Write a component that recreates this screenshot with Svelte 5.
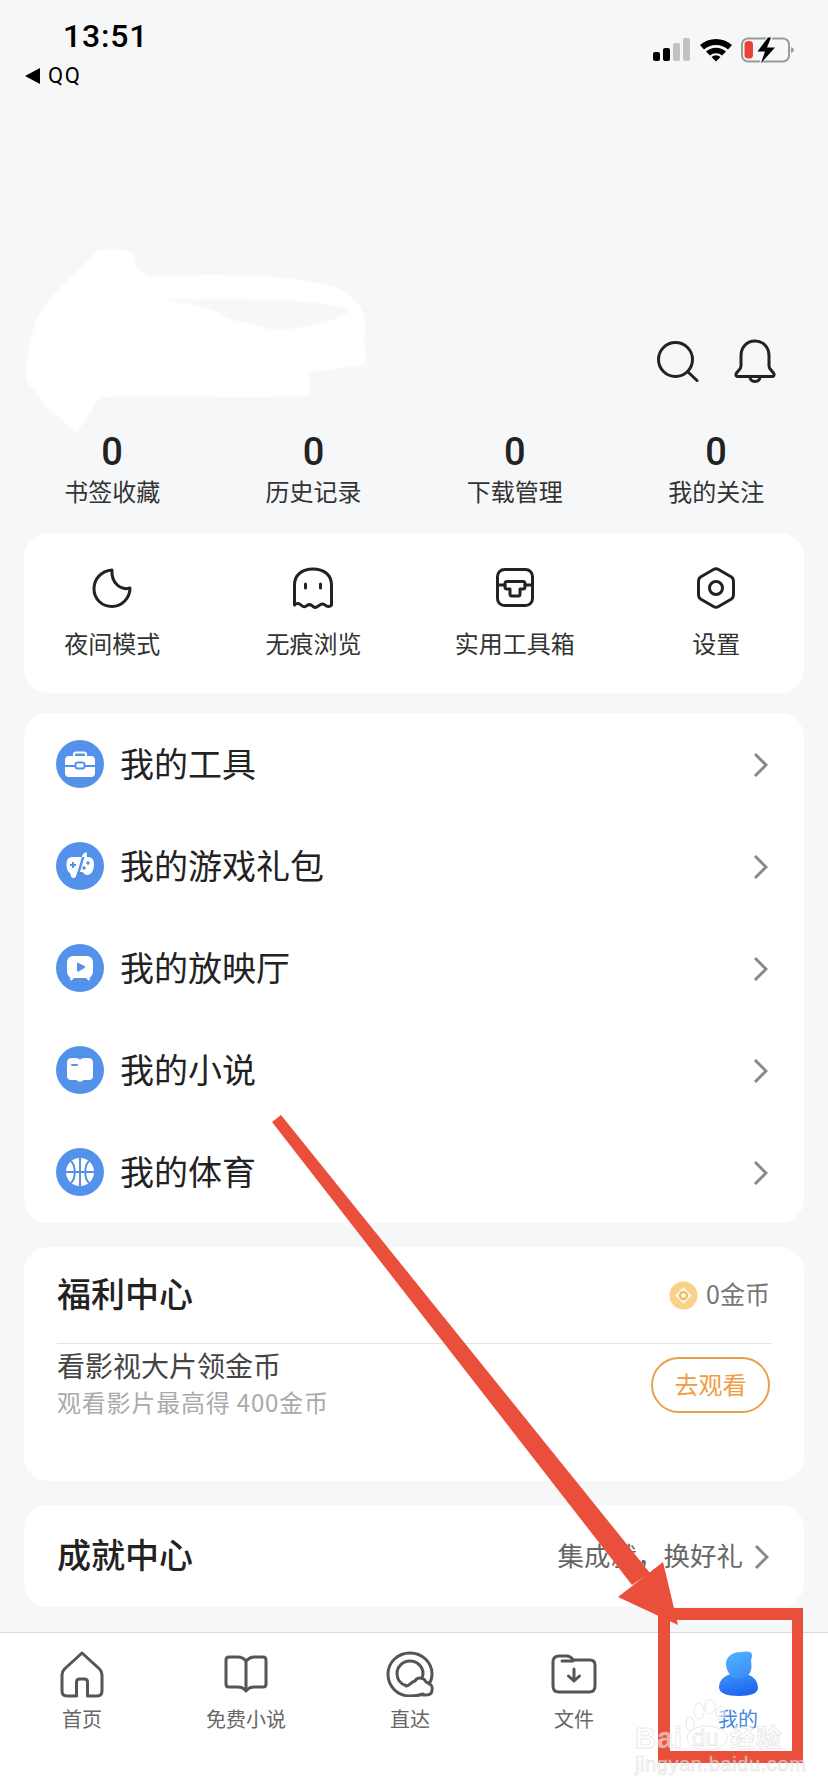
<script>
  const stats = ['书签收藏', '历史记录', '下载管理', '我的关注'];
  const tabs = ['首页', '免费小说', '直达', '文件', '我的'];
</script>

{#snippet chevron()}
  <svg class="chevron" width="15" height="26" viewBox="0 0 15 26"><path d="M2 2 L13 13 L2 24" /></svg>
{/snippet}

<div class="page">
  <header class="status">
    <div>
      <div class="time">13:51</div>
      <div class="back"><i class="tri"></i>QQ</div>
    </div>
    <svg class="sys" width="141" height="27" viewBox="653 37 141 27">
      <rect x="653" y="52" width="7" height="9" rx="2" fill="#000" />
      <rect x="663" y="48" width="7" height="13" rx="2" fill="#000" />
      <rect x="673" y="43" width="7" height="18" rx="2" fill="#c2c2c4" />
      <rect x="683" y="38" width="7" height="23" rx="2" fill="#c2c2c4" />
      <path d="M700 45 A24 24 0 0 1 732 45 L728 49.5 A18 18 0 0 0 704 49.5Z M706 51.5 A15 15 0 0 1 726 51.5 L722 55.5 A9.5 9.5 0 0 0 710 55.5Z M711.5 57 A7 7 0 0 1 720.5 57 L716 61.5Z" fill="#000" />
      <rect x="742" y="38.5" width="47" height="23" rx="6" fill="none" stroke="#9a9a9c" stroke-width="2" />
      <path d="M791 47 Q794 48 794 50 Q794 52 791 53Z" fill="#9a9a9c" />
      <rect x="744.5" y="41" width="8.5" height="17.5" rx="3.5" fill="#ea4335" />
      <path d="M768 36 L755 52 H763 L759 64 L777 47 H769 L773 36Z" fill="#f6f7f9" />
      <path d="M768 37.5 L757.5 51.5 H765 L761 63 L775 47.5 H767 L771 37.5Z" fill="#000" />
    </svg>
  </header>

  <div class="tools">
    <svg width="42" height="41" viewBox="0 0 42 41" fill="none" stroke="#222" stroke-width="3" stroke-linecap="round">
      <circle cx="18.5" cy="18.5" r="17" />
      <path d="M31 31 L40 39.5" />
    </svg>
    <svg width="42" height="44" viewBox="0 0 42 44" fill="none" stroke="#222" stroke-width="3" stroke-linejoin="round">
      <path d="M21 2 C12 2 7 9 7 17 V27 C7 31 3 32 2 35 Q1.5 37.5 4 37.5 H38 Q40.5 37.5 40 35 C39 32 35 31 35 27 V17 C35 9 30 2 21 2Z" />
      <path d="M16 37.5 C16 41 18 42.5 21 42.5 C24 42.5 26 41 26 37.5" />
    </svg>
  </div>

  <section class="grid stats">
    {#each stats as label}
      <div>
        <div class="num">0</div>
        <div class="label">{label}</div>
      </div>
    {/each}
  </section>

  <section class="card shortcuts">
    <div class="grid">
      <div>
        <span class="ico-box">
          <svg class="ico" width="42" height="42" viewBox="0 0 42 42"><path d="M21 3 C10 4 3 12 3 22 C3 32 11 39.5 21 39.5 C31 39.5 39 31 39 21 C30 24 20 16 21 3Z" /></svg>
        </span>
        <div class="label">夜间模式</div>
      </div>
      <div>
        <span class="ico-box">
          <svg class="ico" width="42" height="42" viewBox="0 0 42 42">
            <path d="M2.5 38 V18 C2.5 8 10 2 21 2 C32 2 39.5 8 39.5 18 V38 C38 40 35 40 33 38 C31 36 29 37 27 38.5 C25 40.5 23 41 21 39.5 C19 37.5 17 37 15 38.5 C13 40.5 11 40 9 38 C7 36 4 36 2.5 38Z" />
            <path d="M13.5 17 V21 M28.5 17 V21" />
          </svg>
        </span>
        <div class="label">无痕浏览</div>
      </div>
      <div>
        <span class="ico-box">
          <svg class="ico" width="42" height="42" viewBox="-2 -1 42 42">
            <rect x="1.5" y="1.5" width="35" height="36" rx="7" />
            <path d="M1.5 17 H9 M29 17 H36.5" />
            <path d="M11 13.5 H27 Q29 13.5 29 15.5 V19 Q29 21 27 21 H24 V26 Q24 28 22 28 H16 Q14 28 14 26 V21 H11 Q9 21 9 19 V15.5 Q9 13.5 11 13.5Z" />
          </svg>
        </span>
        <div class="label">实用工具箱</div>
      </div>
      <div>
        <span class="ico-box">
          <svg class="ico" width="42" height="44" viewBox="-1.5 0 42 44">
            <path d="M17 3.5 Q19.5 2 22 3.5 L35 11 Q37 12.5 37 15 V29 Q37 31.5 35 33 L22 40.5 Q19.5 42 17 40.5 L4 33 Q2 31.5 2 29 V15 Q2 12.5 4 11Z" />
            <circle cx="19.5" cy="22" r="6.5" />
          </svg>
        </span>
        <div class="label">设置</div>
      </div>
    </div>
  </section>

  <section class="card menu">
    <div class="row">
      <span class="badge">
        <svg width="48" height="48" viewBox="0 0 48 48">
          <path d="M18 16 V14.5 Q18 12.5 20 12.5 H28 Q30 12.5 30 14.5 V16" fill="none" stroke="#fff" stroke-width="2" />
          <path d="M13 16 H35 Q39 16 39 20 V25 H9 V20 Q9 16 13 16Z M9 27 H39 V33 Q39 37 35 37 H13 Q9 37 9 33Z" fill="#fff" />
          <rect x="19.5" y="22.5" width="9" height="6" rx="2" fill="#fff" stroke="#5391ea" stroke-width="2" />
        </svg>
      </span>
      <span class="name">我的工具</span>
      {@render chevron()}
    </div>
    <div class="row">
      <span class="badge">
        <svg width="48" height="48" viewBox="0 0 48 48">
          <path d="M16 15 H32 Q38 15 38 22 C38 29 35 33 31 33 C29 33 28 31 26.5 30 H22 C20 33 20 37 17 36 C14 35 15 32 14 31 C11 29 10.5 25 10.5 22 Q10.5 15 16 15Z" fill="#fff" />
          <path d="M29 9 L20 39" stroke="#5391ea" stroke-width="2.5" />
          <path d="M30.5 10 C27 11 26 14 26 15 H31Z" fill="#fff" />
          <path d="M14 23 H20 M17 20 V26" stroke="#5391ea" stroke-width="2" />
          <circle cx="32" cy="21" r="1.8" fill="#5391ea" />
          <circle cx="28" cy="26" r="1.8" fill="#5391ea" />
        </svg>
      </span>
      <span class="name">我的游戏礼包</span>
      {@render chevron()}
    </div>
    <div class="row">
      <span class="badge">
        <svg width="48" height="48" viewBox="0 0 48 48">
          <rect x="11" y="12" width="26" height="22" rx="6" fill="#fff" />
          <path d="M14 33 H19 L15.5 36.5 H14.5Z M29 33 H34 L33.5 36.5 H32.5Z" fill="#fff" />
          <path d="M21 19.5 Q21 18 22.5 19 L28.5 22 Q30 23 28.5 24 L22.5 27.5 Q21 28 21 26.5Z" fill="#5391ea" />
        </svg>
      </span>
      <span class="name">我的放映厅</span>
      {@render chevron()}
    </div>
    <div class="row">
      <span class="badge">
        <svg width="48" height="48" viewBox="0 0 48 48">
          <path d="M16 12 H19 Q23 12 24 14 Q25 12 29 12 H32 Q37 12 37 17 V30 Q37 34 33 34 H28 L24 36 L20 34 H15 Q11 34 11 30 V17 Q11 12 16 12Z" fill="#fff" />
          <path d="M16 19 H21" stroke="#5391ea" stroke-width="2" stroke-linecap="round" />
        </svg>
      </span>
      <span class="name">我的小说</span>
      {@render chevron()}
    </div>
    <div class="row">
      <span class="badge">
        <svg width="48" height="48" viewBox="0 0 48 48">
          <circle cx="24" cy="24" r="14" fill="#fff" />
          <path d="M24 10 V38 M10 24 H38 M15 13 C20 18 20 30 15 35 M33 13 C28 18 28 30 33 35" fill="none" stroke="#5391ea" stroke-width="2" />
        </svg>
      </span>
      <span class="name">我的体育</span>
      {@render chevron()}
    </div>
  </section>

  <section class="card welfare">
    <div class="head">
      <span class="title">福利中心</span>
      <span class="coins">
        <svg width="29" height="29" viewBox="0 0 29 29">
          <circle cx="14.5" cy="14.5" r="14" fill="#f8d289" />
          <path d="M14.5 6 L23 14.5 L14.5 23 L6 14.5Z" fill="#fdf3dc" />
          <circle cx="14.5" cy="14.5" r="3.5" fill="none" stroke="#eeb65c" stroke-width="2" />
        </svg>
        <span class="up">0金币</span>
      </span>
    </div>
    <div class="rule"></div>
    <div class="task">
      <div>
        <div class="task-title">看影视大片领金币</div>
        <div class="task-sub">观看影片最高得 400金币</div>
      </div>
      <button><span class="up">去观看</span></button>
    </div>
  </section>

  <section class="card achieve">
    <span class="title">成就中心</span>
    <span class="more">集成就，换好礼</span>
    {@render chevron()}
  </section>

  <nav class="tabbar">
    {#each tabs as tab, i}
      <div class="tab" class:active={i === 4}>
        <span class="tab-ico">
          {#if i === 0}
            <svg width="44" height="47" viewBox="0 0 44 47"><path d="M22 2 L39.5 18 Q42 20.5 42 24 V40 Q42 45 37 45 H27.5 V31 Q27.5 28 24.5 28 H19.5 Q16.5 28 16.5 31 V45 H7 Q2 45 2 40 V24 Q2 20.5 4.5 18Z" /></svg>
          {:else if i === 1}
            <svg width="44" height="38" viewBox="0 0 44 38"><path d="M22 6 C20 3.5 18 2 14 2 H5 Q2 2 2 5 V29 Q2 32 5 32 H14 Q18 32 20 34 L22 36 L24 34 Q26 32 30 32 H39 Q42 32 42 29 V5 Q42 2 39 2 H30 Q26 2 22 6Z M22 6 V36" /></svg>
          {:else if i === 2}
            <svg width="48" height="46" viewBox="0 0 48 46">
              <path d="M37 43 C33 44.5 29 45 24 45 C11 45 2 35 2 23 C2 11 12 2 24 2 C36 2 46 11 46 23 C46 27 45 30 43 33" />
              <path d="M20 34.5 C14 33 11 28 11 22.5 C11 15.5 17 10 24 10 C31 10 37 15.5 37 22.5 C37 24 36.5 25 36 27" />
              <path d="M20 35 C23 35 25 31 29 30 C31 26 38 26 40 31 C44 32 47 35 46 39 C46 42 44 44 40 44 H37" />
            </svg>
          {:else if i === 3}
            <svg width="46" height="40" viewBox="0 0 46 40">
              <path d="M2 8 Q2 2 8 2 H15 Q20 2 22 6 H39 Q44 6 44 11 V32 Q44 38 38 38 H8 Q2 38 2 32Z M11 7 H22" />
              <path d="M23 15 V27 M17.5 22 L23 27 L28.5 22" />
            </svg>
          {:else}
            <svg width="39" height="46" viewBox="0 0 39 46">
              <defs>
                <linearGradient id="head" x1="0.3" y1="0" x2="0.7" y2="1"><stop offset="0" stop-color="#4fb0ff" /><stop offset="1" stop-color="#3a8cf8" /></linearGradient>
                <linearGradient id="body" x1="0.3" y1="0" x2="0.7" y2="1"><stop offset="0" stop-color="#3d8ffa" /><stop offset="1" stop-color="#1a62ee" /></linearGradient>
              </defs>
              <path class="fill" fill="url(#body)" d="M0 36 C0 27 9 23 14 23 H25 C31 23 39 28 39 37 C39 42 32 45 20 45 C7 45 0 42 0 36Z" />
              <path class="fill" fill="url(#head)" d="M7 13 C7 5 14 1 22 1 C27 0 33 0 33 4 C33 7 32 8 32 10 C33 16 33 22 27 26 C22 29 15 28 11 24 C9 21 7 17 7 13Z" />
            </svg>
          {/if}
        </span>
        <span class="tab-label">{tab}</span>
      </div>
    {/each}
  </nav>

  <!-- white scribble over the user name -->
  <svg class="scribble" width="828" height="460" viewBox="0 0 828 460">
    <path fill="#fff" d="M97 251 C108 248 125 249 134 253 L136 268 L150 277 C220 272 330 275 352 297 C368 312 365 325 364 345 C366 352 366 358 365 365 L309 372 L310 396 C270 398 180 396 100 397 C92 410 84 422 77 433 C66 424 55 414 45 405 C38 396 32 388 26 380 C26 365 28 345 34 326 C42 300 70 280 97 251Z" />
    <path fill="#f6f7f9" d="M160 300 C220 298 320 298 351 310 C335 322 310 328 275 330 L227 318 C210 305 185 303 160 300Z" />
  </svg>

  <!-- red annotation and the watermark lie over the screen -->
  <svg class="overlay" width="828" height="1792" viewBox="0 0 828 1792">
    <path fill="#ea4f3c" d="M272 1122 L281 1115 L650 1573 L632 1585Z" />
    <path fill="#ea4f3c" d="M663 1562 L618 1597 L678 1625Z" />
    <path fill="#ea4f3c" fill-rule="evenodd" d="M658 1608 H803 V1763 H658Z M670 1620 V1751 H792 V1620Z" />
    <g class="mark">
      <ellipse cx="699" cy="1711" rx="5" ry="8" />
      <ellipse cx="710" cy="1707" rx="5" ry="7" />
      <ellipse cx="721" cy="1713" rx="5" ry="7" />
      <ellipse cx="690" cy="1724" rx="4" ry="7" />
      <ellipse cx="707" cy="1738" rx="20" ry="12" />
      <text class="big" x="635" y="1748">Bai</text>
      <text class="du" x="692" y="1746">du</text>
      <text class="big cn" x="730" y="1747">经验</text>
      <text class="url" x="635" y="1771">jingyan.baidu.com</text>
    </g>
  </svg>
</div>

<style>
  :global(body) {
    background: #f6f7f9;
  }

  .page {
    position: relative;
    width: 828px;
    height: 1792px;
    overflow: hidden;
    background: #f6f7f9;
    color: #222;
    font-family: "Noto Sans CJK SC", "Noto Sans", sans-serif;
  }

  .status {
    display: flex;
    justify-content: space-between;
    align-items: flex-start;
    height: 72px;
    padding: 16px 34px 0 25px;
  }

  .time {
    margin-left: 38px;
    font: 500 32px/40px Roboto, sans-serif;
    color: #000;
    letter-spacing: 0.8px;
  }

  .back {
    display: flex;
    align-items: center;
    margin-top: 8px;
    font: 22px/24px Roboto, sans-serif;
    letter-spacing: 1.5px;
    color: #000;
  }

  .tri {
    width: 0;
    height: 0;
    margin-right: 8px;
    border-top: 8px solid transparent;
    border-bottom: 8px solid transparent;
    border-right: 15px solid #000;
  }

  .sys {
    margin-top: 21px;
  }

  .tools {
    display: flex;
    justify-content: flex-end;
    align-items: center;
    gap: 35px;
    height: 44px;
    margin-top: 251px;
    padding-right: 52px;
  }

  .grid {
    display: grid;
    grid-template-columns: repeat(4, 201.33px);
    text-align: center;
  }

  .stats {
    margin: 47px 0 24px 11.5px;
  }

  .num {
    font: 500 38px/44px Roboto, sans-serif;
  }

  .label {
    margin-top: 1px;
    padding-bottom: 2px;
    font-size: 24px;
    line-height: 32px;
    color: #333;
  }

  .card {
    margin: 0 24px;
    background: #fff;
    border-radius: 24px;
  }

  .shortcuts {
    height: 160px;
    padding-top: 34px;
    box-sizing: border-box;
    margin-bottom: 20px;
  }

  .shortcuts .grid {
    margin-left: -12.5px;
  }

  .shortcuts .label {
    margin-top: 18px;
  }

  .ico-box {
    display: flex;
    justify-content: center;
    align-items: center;
    height: 42px;
  }

  .ico {
    flex: none;
    fill: none;
    stroke: #222;
    stroke-width: 3;
    stroke-linejoin: round;
    stroke-linecap: round;
  }

  .menu {
    margin-bottom: 24px;
  }

  .row {
    display: flex;
    align-items: center;
    height: 102px;
    padding: 0 36px 0 32px;
  }

  .badge {
    flex: none;
    width: 48px;
    height: 48px;
    border-radius: 50%;
    background: #5391ea;
  }

  .badge svg {
    display: block;
  }

  .name {
    flex: 1;
    margin-left: 16px;
    padding-bottom: 4px;
    font-size: 34px;
  }

  .chevron {
    flex: none;
    margin-top: 2px;
    fill: none;
    stroke: #888;
    stroke-width: 3;
  }

  .welfare {
    height: 234px;
    margin-bottom: 24px;
    padding-left: 33px;
  }

  .head {
    display: flex;
    justify-content: space-between;
    align-items: center;
    height: 96px;
    padding-right: 34px;
  }

  .title {
    padding-bottom: 6px;
    font-size: 34px;
    font-weight: 500;
  }

  .coins {
    display: flex;
    align-items: center;
    gap: 8px;
    font-size: 25px;
    color: #777;
  }

  .up {
    display: block;
    padding-bottom: 4px;
  }

  .rule {
    height: 1px;
    margin-right: 32px;
    background: #e4e4e6;
  }

  .task {
    display: flex;
    justify-content: space-between;
    align-items: flex-start;
    padding-right: 34px;
  }

  .task-title {
    margin-top: 1px;
    font-size: 28px;
    line-height: 40px;
    color: #444;
  }

  .task-sub {
    margin-top: 1px;
    font-size: 24px;
    line-height: 32px;
    color: #aaa;
    letter-spacing: 0.8px;
  }

  button {
    width: 119px;
    height: 56px;
    margin-top: 13px;
    padding: 0;
    border: 2px solid #e8a04c;
    border-radius: 28px;
    background: #fff;
    color: #ef9c42;
    font: 24px "Noto Sans CJK SC", sans-serif;
  }

  .achieve {
    display: flex;
    align-items: center;
    height: 102px;
    padding: 0 35px 0 33px;
  }

  .achieve .title {
    flex: 1;
  }

  .more {
    margin-right: 11px;
    padding-bottom: 4px;
    font-size: 26.5px;
    color: #666;
  }

  .tabbar {
    display: grid;
    grid-template-columns: repeat(5, 164px);
    box-sizing: border-box;
    height: 160px;
    margin-top: 25px;
    padding-top: 17px;
    border-top: 1px solid #d9d9d9;
    background: #fff;
    text-align: center;
  }

  .tab {
    display: flex;
    flex-direction: column;
    align-items: center;
  }

  .tab-ico {
    display: flex;
    align-items: center;
    height: 48px;
  }

  .tab-ico svg {
    fill: none;
    stroke: #555;
    stroke-width: 3;
    stroke-linejoin: round;
    stroke-linecap: round;
  }

  .tab-ico .fill {
    stroke: none;
  }

  .tab-label {
    margin-top: 8px;
    font-size: 20px;
    line-height: 26px;
    color: #666;
  }

  .active .tab-label {
    color: #3f86e0;
  }

  .scribble,
  .overlay {
    position: absolute;
    left: 0;
    top: 0;
    pointer-events: none;
  }

  .scribble {
    filter: blur(1px);
  }

  .mark {
    fill: rgba(255, 255, 255, 0.55);
    stroke: rgba(190, 190, 190, 0.35);
    stroke-width: 1;
  }

  .big {
    font: 700 29px "Liberation Sans", sans-serif;
    letter-spacing: 1px;
  }

  .du {
    font: 24px "Liberation Sans", sans-serif;
  }

  .cn {
    font: 700 25px "Noto Sans CJK SC", sans-serif;
  }

  .url {
    font: 20px "Liberation Sans", sans-serif;
    letter-spacing: 0.6px;
  }
</style>
